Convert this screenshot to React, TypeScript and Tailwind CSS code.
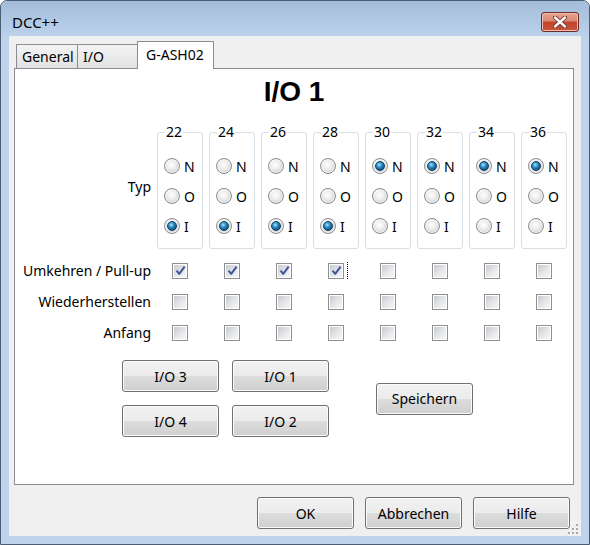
import React from "react";

const ports = [22, 24, 26, 28, 30, 32, 34, 36];
const typ: Record<number, "N" | "O" | "I"> = {
  22: "I", 24: "I", 26: "I", 28: "I",
  30: "N", 32: "N", 34: "N", 36: "N",
};
const umkehren = [true, true, true, true, false, false, false, false];

const Radio = ({ checked }: { checked: boolean }) => (
  <span className="flex h-[16px] w-[16px] shrink-0 items-center justify-center rounded-full border border-[#8a8c8e] bg-[radial-gradient(circle_at_35%_30%,#ffffff_0%,#e6e6e6_45%,#c2c2c2_100%)] shadow-[inset_0_0_0_1px_#f4f4f4]">
    {checked ? (
      <span className="h-[10px] w-[10px] rounded-full border border-[#163f60] bg-[radial-gradient(circle_at_40%_35%,#a6e6ff_0%,#2f92c8_35%,#0f5687_72%,#0a3456_100%)]" />
    ) : (
      <span className="h-[10px] w-[10px] rounded-full bg-[radial-gradient(circle_at_45%_40%,#ffffff,#dcdcdc)]" />
    )}
  </span>
);

const Check = ({ checked }: { checked: boolean }) => (
  <span className="flex h-[16px] w-[16px] shrink-0 items-center justify-center border border-[#8e8f8f] bg-white">
    <span className="flex h-[12px] w-[12px] items-center justify-center bg-[linear-gradient(135deg,#c6c9ce_0%,#e4e5e8_50%,#f7f7f7_100%)]">
      {checked && (
        <svg width="11" height="11" viewBox="0 0 11 11">
          <path d="M1.6 5.6 L4.2 8.8 L9.6 1.6" fill="none" stroke="#43589a" strokeWidth="2.1" strokeLinejoin="round" />
        </svg>
      )}
    </span>
  </span>
);

const Btn = ({ children, className = "" }: { children: React.ReactNode; className?: string }) => (
  <button
    className={`flex h-[32px] w-[97px] items-center justify-center rounded-[3px] border border-[#707070] bg-[linear-gradient(#f2f2f2_0%,#ebebeb_50%,#dddddd_50%,#cfcfcf_100%)] text-[14px] text-black shadow-[inset_0_0_0_1px_#fbfbfb] ${className}`}
  >
    {children}
  </button>
);

const rowGrid = "grid grid-cols-[136px_repeat(8,46px)] gap-x-[6px]";

export default function App() {
  return (
    <div className="h-[545px] w-[590px] overflow-hidden rounded-t-[7px] border border-[#4b5d72] bg-[#bed3eb] font-['Noto_Sans',sans-serif] text-black">
      {/* title bar */}
      <div className="flex h-[35px] items-center justify-between bg-[linear-gradient(#a3bcd9,#bcd2eb)] pt-[7px] pl-[11px] pr-[10px]">
        <span className="text-[15px] leading-none">DCC++</span>
        <button className="flex h-[20px] w-[38px] items-center justify-center rounded-[3px] border border-[#6e2c24] bg-[linear-gradient(#e7a593_0%,#d98774_45%,#c2432c_50%,#c9553d_100%)] shadow-[inset_0_0_0_1px_#f0bdb0]">
          <svg width="14" height="12" viewBox="0 0 14 12">
            <path d="M2 1.5 L12 10.5 M12 1.5 L2 10.5" stroke="#6e2c24" strokeWidth="4.2" strokeLinecap="round" />
            <path d="M2 1.5 L12 10.5 M12 1.5 L2 10.5" stroke="#ffffff" strokeWidth="2.4" strokeLinecap="round" />
          </svg>
        </button>
      </div>

      {/* client area */}
      <div className="relative mx-[8px] flex h-[500px] flex-col bg-[#f0f0f0]">
        <div className="flex h-[32px] items-end pt-[5px] pl-[7px]">
          <div className="flex h-[24px] w-[62px] items-center border border-b-0 border-[#898c95] bg-[linear-gradient(#f3f3f3,#e2e2e2)] pl-[5px] text-[14px]">
            General
          </div>
          <div className="flex h-[24px] w-[60px] items-center border border-b-0 border-l-0 border-[#898c95] bg-[linear-gradient(#f3f3f3,#e2e2e2)] pl-[5px] text-[14px]">
            I/O
          </div>
          <div className="relative z-10 -mb-px -ml-px flex h-[28px] w-[77px] items-start border border-b-0 border-[#898c95] bg-white pt-[2px] pl-[8px] text-[14px]">
            G-ASH02
          </div>
        </div>

        <div className="ml-[5px] h-[417px] w-[560px] border border-[#898c95] bg-white pt-[7px]">
          <h1 className="h-[32px] text-center font-['Liberation_Sans',Arial,sans-serif] text-[28px] font-bold leading-[32px]">
            I/O 1
          </h1>

          <div className={`${rowGrid} mt-[15px] text-[14px]`}>
            <div className="flex items-center justify-end">Typ</div>
            {ports.map((p) => (
              <fieldset key={p} className="h-[126px] rounded-[3px] border border-[#d5dfe5] px-[6px] pt-[10px] pb-[7px]">
                <legend className="ml-[1px] px-[1px] text-[14px] leading-[18px]">{p}</legend>
                {(["N", "O", "I"] as const).map((v) => (
                  <div key={v} className="flex h-[30px] items-center gap-[4px]">
                    <Radio checked={typ[p] === v} />
                    <span>{v}</span>
                  </div>
                ))}
              </fieldset>
            ))}
          </div>

          <div className="mt-[6px] text-[14px]">
            <div className={`${rowGrid} h-[31px]`}>
              <div className="flex items-center justify-end">Umkehren / Pull-up</div>
              {ports.map((p, i) => (
                <div key={p} className="flex items-center pl-[15px]">
                  <Check checked={umkehren[i]} />
                  {p === 28 && <span className="ml-[3px] h-[17px] border-l border-dotted border-black" />}
                </div>
              ))}
            </div>
            <div className={`${rowGrid} h-[31px]`}>
              <div className="flex items-center justify-end">Wiederherstellen</div>
              {ports.map((p) => (
                <div key={p} className="flex items-center pl-[15px]">
                  <Check checked={false} />
                </div>
              ))}
            </div>
            <div className={`${rowGrid} h-[31px]`}>
              <div className="flex items-center justify-end">Anfang</div>
              {ports.map((p) => (
                <div key={p} className="flex items-center pl-[15px]">
                  <Check checked={false} />
                </div>
              ))}
            </div>
          </div>

          <div className="mt-[12px] ml-[107px] flex items-center">
            <div className="grid grid-cols-[97px_97px] gap-x-[13px] gap-y-[13px]">
              <Btn>I/O 3</Btn>
              <Btn>I/O 1</Btn>
              <Btn>I/O 4</Btn>
              <Btn>I/O 2</Btn>
            </div>
            <Btn className="ml-[47px]">Speichern</Btn>
          </div>
        </div>

        <div className="flex justify-end gap-[11px] pt-[12px] pr-[11px]">
          <Btn>OK</Btn>
          <Btn>Abbrechen</Btn>
          <Btn>Hilfe</Btn>
        </div>

        <svg className="absolute right-[3px] bottom-[2px]" width="10" height="10" viewBox="0 0 10 10">
          {[
            [8, 0], [8, 4], [4, 4], [8, 8], [4, 8], [0, 8],
          ].map(([x, y], i) => (
            <g key={i}>
              <rect x={x + 0.5} y={y + 0.5} width="2" height="2" fill="#ffffff" />
              <rect x={x} y={y} width="2" height="2" fill="#a8a8a8" />
            </g>
          ))}
        </svg>
      </div>
    </div>
  );
}
